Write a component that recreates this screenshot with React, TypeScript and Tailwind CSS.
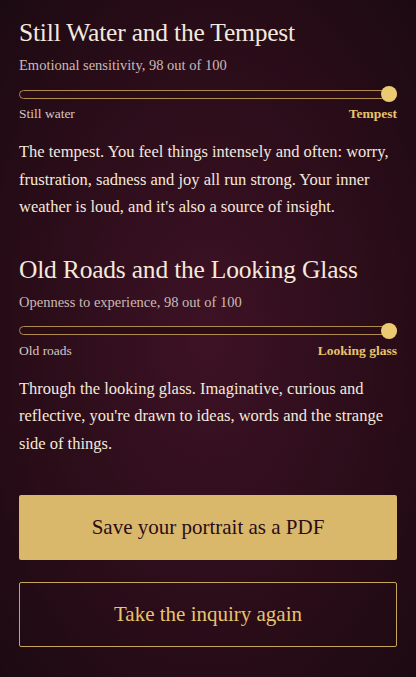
const serif = { fontFamily: '"Liberation Serif", "DejaVu Serif", serif' };

interface Trait {
  title: string;
  subtitle: string;
  low: string;
  high: string;
  score: number;
  text: string;
}

const traits: Trait[] = [
  {
    title: "Still Water and the Tempest",
    subtitle: "Emotional sensitivity, 98 out of 100",
    low: "Still water",
    high: "Tempest",
    score: 98,
    text: "The tempest. You feel things intensely and often: worry, frustration, sadness and joy all run strong. Your inner weather is loud, and it's also a source of insight.",
  },
  {
    title: "Old Roads and the Looking Glass",
    subtitle: "Openness to experience, 98 out of 100",
    low: "Old roads",
    high: "Looking glass",
    score: 98,
    text: "Through the looking glass. Imaginative, curious and reflective, you're drawn to ideas, words and the strange side of things.",
  },
];

function TraitBlock({ trait }: { trait: Trait }) {
  return (
    <section className="flex flex-col">
      <h2 className="text-[25.5px] leading-[30px] text-[#f3e9dc] tracking-[-0.2px]">{trait.title}</h2>
      <p className="mt-[8px] text-[14.5px] leading-[18px] text-[#cdbab4]">{trait.subtitle}</p>
      <div className="relative mt-[12px] h-[16px] flex items-center">
        <div className="h-[9px] w-full rounded-full border border-[#b08b4c] bg-[#2a0c18]" />
        {/* thumb sits flush with the end of the track */}
        <div className="absolute top-0 right-0 h-[16px] w-[16px] rounded-full bg-[#ecca72]" />
      </div>
      <div className="mt-[3px] flex justify-between text-[13.5px] leading-[18px]">
        <span className="text-[#d6c6c0]">{trait.low}</span>
        <span className="font-bold text-[#e9c36a]">{trait.high}</span>
      </div>
      <p className="mt-[15px] text-[16.5px] leading-[27.5px] text-[#f3e9dc]">{trait.text}</p>
    </section>
  );
}

export default function App() {
  return (
    <div
      style={serif}
      className="min-h-[677px] w-full bg-[radial-gradient(ellipse_at_center,#3d1225_0%,#2c0d1a_55%,#1c0a12_100%)] px-[19px] pt-[18px] pb-[30px]"
    >
      <div className="flex flex-col gap-[34px]">
        {traits.map((t) => (
          <TraitBlock key={t.title} trait={t} />
        ))}
      </div>
      <div className="mt-[38px] flex flex-col gap-[22px]">
        <button className="h-[65px] w-full rounded-[2px] bg-[#d9b86b] text-[21px] text-[#2a0d17]">
          Save your portrait as a PDF
        </button>
        <button className="h-[65px] w-full rounded-[2px] border border-[#c9a45c] text-[21px] text-[#e8c46c]">
          Take the inquiry again
        </button>
      </div>
    </div>
  );
}
